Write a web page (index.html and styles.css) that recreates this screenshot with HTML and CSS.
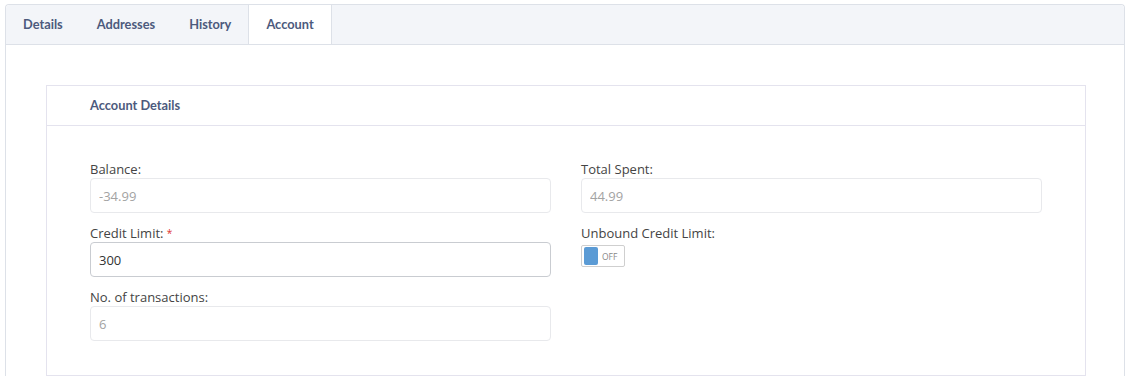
FILE: index.html
```html
<!DOCTYPE html>
<html lang="en">
<head>
    <meta charset="UTF-8">
    <meta name="viewport" content="width=device-width, initial-scale=1.0">
    <title>Customer - Account</title>
    <link rel="stylesheet" href="styles.css">
</head>
<body>
    <div class="card">
        <div class="tabs">
            <div class="tab">Details</div>
            <div class="tab">Addresses</div>
            <div class="tab">History</div>
            <div class="tab active">Account</div>
        </div>

        <div class="card-body">
            <div class="panel">
                <div class="panel-heading">Account Details</div>
                <div class="panel-body">
                    <div class="field">
                        <label for="balance">Balance:</label>
                        <input type="text" id="balance" value="-34.99" disabled>
                    </div>
                    <div class="field">
                        <label for="totalSpent">Total Spent:</label>
                        <input type="text" id="totalSpent" value="44.99" disabled>
                    </div>
                    <div class="field">
                        <label for="creditLimit">Credit Limit: <span class="required">*</span></label>
                        <input type="text" id="creditLimit" value="300">
                    </div>
                    <div class="field">
                        <label>Unbound Credit Limit:</label>
                        <div class="switch">
                            <span class="knob"></span>
                            <span class="switch-text">OFF</span>
                        </div>
                    </div>
                    <div class="field">
                        <label for="transactions">No. of transactions:</label>
                        <input type="text" id="transactions" value="6" disabled>
                    </div>
                </div>
            </div>
        </div>
    </div>
</body>
</html>
```

FILE: styles.css
```css
body {
    margin: 0;
    padding: 4px 0 0 5px;
    font-family: "Open Sans", sans-serif;
    color: #333;
    background-color: #fff;
    overflow: hidden;
}
.card {
    width: 1118px;
    height: 371px;
    border: 1px solid #dde1e8;
    border-bottom: none;
    border-radius: 4px 4px 0 0;
    background: #fff;
}
.tabs {
    display: flex;
    height: 39px;
    background-color: #f3f5f9;
    border-bottom: 1px solid #dde1e8;
    border-radius: 4px 4px 0 0;
}
.tab {
    padding: 0 17px;
    line-height: 39px;
    font-family: Lato, sans-serif;
    font-size: 12.8px;
    font-weight: 700;
    color: #4c5a7d;
}
.tab.active {
    background-color: #fff;
    border-left: 1px solid #dde1e8;
    border-right: 1px solid #dde1e8;
}
.card-body {
    padding: 40px 38px 0 40px;
}
.panel {
    border: 1px solid #e4e3ee;
    height: 289px;
}
.panel-heading {
    height: 39px;
    line-height: 39px;
    padding: 0 43px;
    border-bottom: 1px solid #e4e3ee;
    font-family: Lato, sans-serif;
    font-size: 12.8px;
    font-weight: 700;
    color: #4c5a7d;
}
.panel-body {
    display: grid;
    grid-template-columns: 1fr 1fr;
    column-gap: 30px;
    row-gap: 11px;
    padding: 34px 43px 0 43px;
}
label {
    display: block;
    font-size: 13px;
    line-height: 18px;
    color: #444;
}
.required {
    font-size: 10px;
    vertical-align: top;
    color: #e0312c;
}
input[type="text"] {
    display: block;
    width: 100%;
    height: 35px;
    padding: 0 8px;
    border: 1px solid #c9ccd1;
    border-radius: 4px;
    box-sizing: border-box;
    font-family: "Open Sans", sans-serif;
    font-size: 13px;
    color: #333;
    background: #fff;
}
input[type="text"]:disabled {
    border-color: #e8e9ec;
    color: #a3a3a3;
}
.switch {
    display: flex;
    align-items: center;
    width: 42px;
    height: 20px;
    margin-top: 3px;
    border: 1px solid #cfcfcf;
    border-radius: 2px;
    background: #fff;
}
.knob {
    width: 14px;
    height: 18px;
    margin-left: 2px;
    border-radius: 2px;
    background-color: #5b9bd5;
}
.switch-text {
    margin-left: 4px;
    font-size: 8.5px;
    color: #888;
}
```
